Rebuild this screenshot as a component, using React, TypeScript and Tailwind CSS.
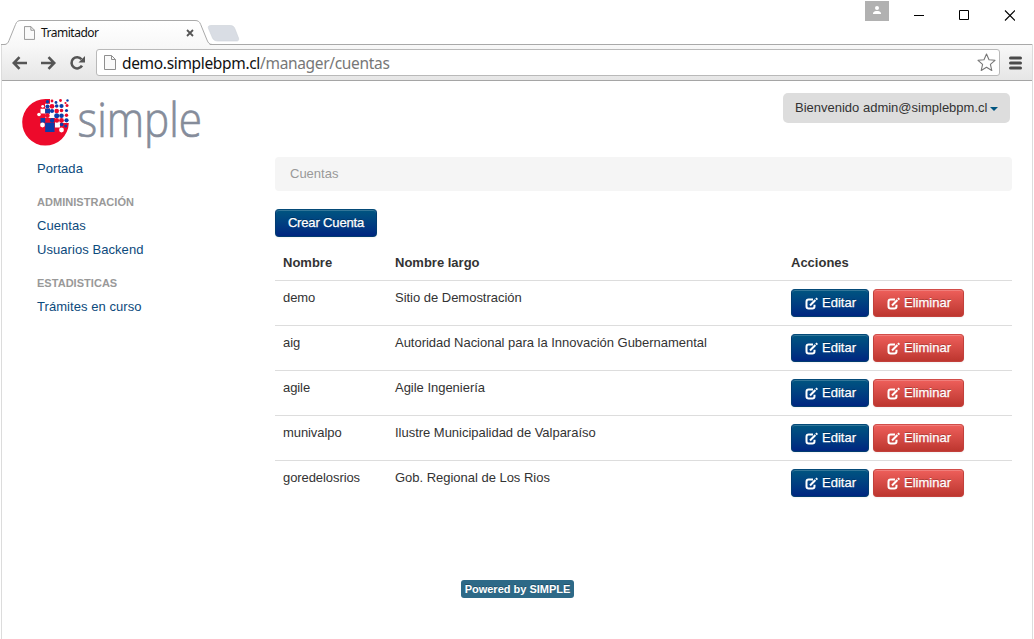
type Account = { name: string; longName: string };

const ACCOUNTS: Account[] = [
  { name: "demo", longName: "Sitio de Demostración" },
  { name: "aig", longName: "Autoridad Nacional para la Innovación Gubernamental" },
  { name: "agile", longName: "Agile Ingeniería" },
  { name: "munivalpo", longName: "Ilustre Municipalidad de Valparaíso" },
  { name: "goredelosrios", longName: "Gob. Regional de Los Rios" },
];

const PageIcon = ({ className }: { className: string }) => (
  <svg className={className} viewBox="0 0 12 15" fill="none" stroke="#8f8f8f">
    <path d="M.5.5H7.5L11.5 4.5V14.5H.5Z" fill="#fafafa" />
    <path d="M7.5.5V4.5H11.5" />
  </svg>
);

const EditIcon = () => (
  <svg className="mt-px h-[13px] w-[13px] shrink-0" viewBox="0 0 13 13" fill="none" stroke="#fff">
    <path d="M8 2.5H3.7Q1.5 2.5 1.5 4.7V9.3Q1.5 11.5 3.7 11.5H7.3Q9.5 11.5 9.5 9.3V7.8" strokeWidth="2" />
    <path d="M5 8.5L10.4 3.1" strokeWidth="2.1" />
    <path d="M11 2.5L12.3 1.2" strokeWidth="2.1" />
  </svg>
);

const TitleBar = () => (
  <div className="relative flex h-[44px] bg-white">
    <svg className="absolute left-0 top-0 h-[45px] w-[244px]" viewBox="0 0 244 45" fill="none">
      <defs>
        <linearGradient id="tab" x1="0" y1="0" x2="0" y2="1">
          <stop offset="0" stopColor="#fff" />
          <stop offset="1" stopColor="#f8f8f8" />
        </linearGradient>
      </defs>
      <path
        d="M211 25.5H230C233 25.5 234 26.5 235 29L238.5 38C239 40 238.5 41 236.5 41H218C215 41 213.5 40 212.5 38L208.5 28.5C207.8 26.5 208.5 25.5 211 25.5Z"
        fill="#d9dde4"
        stroke="#cdd2d9"
        strokeWidth=".6"
      />
      <path d="M5 45L9 40.5L15.5 24.5L21 20.5H195L200.7 24.5L207 40L210 45Z" fill="url(#tab)" />
      <path
        d="M1 44.5H4C7 44.5 8 43 9 40.5L15.5 24.5C16.7 21.5 18 20.5 21 20.5H195C198 20.5 199.5 21.5 200.7 24.5L207 40C208.2 43 209.5 44.5 212.5 44.5H244"
        stroke="#a9a9a9"
      />
    </svg>
    <div className="relative mt-[20px] flex h-[25px] w-[207px] items-center pl-[24px] pr-[13px]">
      <PageIcon className="h-[14px] w-[11px]" />
      <span className="ml-[6px] whitespace-nowrap font-['Noto_Sans',sans-serif] text-[12px] tracking-[-0.5px] text-[#111]">
        Tramitador
      </span>
      <svg className="ml-auto h-[8px] w-[8px]" viewBox="0 0 8 8" stroke="#555" strokeWidth="1.8">
        <path d="M1 1L7 7M7 1L1 7" />
      </svg>
    </div>
    <div className="ml-auto flex pr-[19px]">
      <div className="mt-px flex h-[20px] w-[24px] justify-center bg-[#b1b1b1] pt-[5px]">
        <svg className="h-[9px] w-[10px]" viewBox="0 0 10 9" fill="#fff">
          <circle cx="5" cy="2.1" r="2" />
          <path d="M1 8V7.2C1 5.6 3.4 5 5 5S9 5.6 9 7.2V8Z" />
        </svg>
      </div>
      <svg className="ml-[25px] mt-[10px] h-[11px] w-[101px]" viewBox="0 0 101 11" fill="none" stroke="#000">
        <path d="M0 5.5H10" />
        <path d="M45.5.5H54.5V9.5H45.5Z" />
        <path d="M91 .5L101 10.5M101 .5L91 10.5" strokeWidth="1.1" />
      </svg>
    </div>
  </div>
);

const Toolbar = () => (
  <div className="flex h-[37px] items-center border-y border-t-[#a9a9a9] border-b-[#a5a5a5] bg-linear-to-b from-[#f8f8f8] to-[#e6e6e6] pl-[10px] pr-[10px]">
    <svg className="h-[16px] w-[76px]" viewBox="0 0 76 16" fill="none" stroke="#555" strokeWidth="2.6">
      <path d="M15 8H2M7.5 2.2L1.8 8L7.5 13.8" />
      <path d="M29 8H42M36.5 2.2L42.2 8L36.5 13.8" />
      <path d="M69.5 4.3A5.6 5.6 0 1 0 70 10.6" />
      <path d="M73 1V7.5H66.5Z" fill="#555" stroke="none" />
    </svg>
    <div className="ml-[8px] flex h-[27px] w-[904px] items-center rounded-[3px] border border-[#b9b9b9] bg-white pl-[7px] pr-[3px]">
      <PageIcon className="h-[15px] w-[12px]" />
      <span className="ml-[6px] whitespace-nowrap font-['Noto_Sans',sans-serif] text-[15.5px] leading-[24px] tracking-[-0.33px] text-[#777]">
        <span className="text-[#111]">demo.simplebpm.cl</span>/manager/cuentas
      </span>
      <svg className="ml-auto h-[19px] w-[19px]" viewBox="0 0 19 19" fill="none" stroke="#777" strokeWidth="1.1" strokeLinejoin="round">
        <path d="M9.5 1L12 6.8L18 7.3L13.4 11.4L14.8 17.5L9.5 14.3L4.2 17.5L5.6 11.4L1 7.3L7 6.8Z" />
      </svg>
    </div>
    <svg className="ml-auto h-[14px] w-[13px]" viewBox="0 0 13 14" stroke="#4a4a4a" strokeWidth="3" strokeLinecap="round">
      <path d="M1.5 2H11.5M1.5 7H11.5M1.5 12H11.5" />
    </svg>
  </div>
);

const R = "#ed0a2b";
const B = "#0b3ea8";
const W = "#fff";

// [x, y, radius, color] of the loose pixels around the disc
const DOTS: [number, number, number, string][] = [
  [25.5, 2.7, 1.7, B],
  [30, 2, 1.4, R],
  [34, 3.5, 1.4, B],
  [38.5, 1.5, 1.4, R],
  [45.5, 1.5, 1.2, B],
  [43.5, 4, 1.1, R],
  [25.5, 7.5, 2.1, B],
  [30, 7.3, 2.4, R],
  [34.7, 7, 1.8, B],
  [39.5, 7, 2.1, B],
  [45, 6.5, 1.5, R],
  [20.7, 7.3, 1.4, W],
  [30, 12, 2.1, B],
  [34.7, 12, 2.3, R],
  [39.5, 11.5, 1.8, R],
  [44.5, 11.5, 1.6, B],
  [17, 15.5, 1.8, W],
  [25.3, 16.7, 2.4, R],
  [30, 16.7, 1.8, W],
  [34.7, 16.7, 2.5, B],
  [39.5, 16.7, 2.3, B],
  [44.5, 16.2, 1.7, R],
  [30.2, 21.4, 2.3, B],
  [34.8, 21.4, 2.3, R],
  [39.5, 21.5, 2.4, R],
  [44.5, 21.3, 2.1, B],
  [20.5, 26, 2.4, W],
  [39.7, 25.5, 1.8, B],
  [43.7, 27, 1.5, B],
  [39.5, 31, 2.4, W],
];

const Logo = () => (
  <svg className="h-[56px] w-[184px] overflow-visible" viewBox="0 0 184 56">
    <path d="M23.5 0A23.3 23.3 0 1 0 46.8 24V20L28 2V0Z" fill={R} />
    <path d="M28 0H47V24H33V28.4H38V24H33V19H28ZM23 4.8H28V9.5H23Z" fill={W} />
    <path d="M18.5 9.7H23.2V14.4H18.5ZM23.2 14.4H28V19H23.2Z" fill={W} />
    <path d="M18.5 19H23.2V23.7H18.5ZM23.2 23.7H32.5V33H23.2ZM23.2 9.7H28V14.4H23.2Z" fill={B} />
    {DOTS.map(([x, y, r, fill]) => (
      <circle key={`${x}-${y}`} cx={x} cy={y} r={r} fill={fill} />
    ))}
    <text
      transform="translate(55.5 38) scale(.88 1)"
      fontFamily="Open Sans, sans-serif"
      fontWeight="300"
      fontSize="48"
      fill="#858c9a"
      stroke="#858c9a"
      strokeWidth=".7"
    >
      simple
    </text>
  </svg>
);

const NavLink = ({ children }: { children: string }) => (
  <a className="block h-[24px] leading-[24px] tracking-[0.06px] text-[#0c4a7c]">{children}</a>
);

const NavHeader = ({ children }: { children: string }) => (
  <h3 className="mt-[9px] h-[24px] text-[11px] font-bold leading-[25px] tracking-[0.03px] text-[#999]">{children}</h3>
);

const Sidebar = () => (
  <nav className="w-[238px]">
    <NavLink>Portada</NavLink>
    <NavHeader>ADMINISTRACIÓN</NavHeader>
    <NavLink>Cuentas</NavLink>
    <NavLink>Usuarios Backend</NavLink>
    <NavHeader>ESTADISTICAS</NavHeader>
    <NavLink>Trámites en curso</NavLink>
  </nav>
);

const BLUE =
  "border-[#013b70] border-t-[#044a78] bg-linear-to-b from-[#005580] to-[#002580]";
const RED =
  "border-[#c2403b] border-t-[#d24d49] bg-linear-to-b from-[#ee5f5b] to-[#bd362f]";
const BUTTON =
  "flex h-[28px] items-center justify-center whitespace-nowrap rounded-[4px] border text-[13px] text-white [-webkit-text-stroke:0.25px_white] [text-shadow:0_-1px_0_rgba(0,0,0,0.25)] shadow-[inset_0_1px_0_rgba(255,255,255,0.2),0_1px_2px_rgba(0,0,0,0.05)]";

const AccountsTable = () => (
  <table className="mt-[7px] w-full table-fixed text-left text-[#333]">
    <thead>
      <tr className="h-[36px]">
        <th className="w-[112px] px-2 pt-[2px]">Nombre</th>
        <th className="w-[396px] px-2 pt-[2px]">Nombre largo</th>
        <th className="px-2 pt-[2px]">Acciones</th>
      </tr>
    </thead>
    <tbody>
      {ACCOUNTS.map((a) => (
        <tr key={a.name} className="h-[45px] border-t border-[#ddd] align-top">
          <td className="px-2 pt-[7px] leading-[20px] tracking-[-0.08px]">{a.name}</td>
          <td className="whitespace-nowrap px-2 pt-[7px] leading-[20px] tracking-[-0.02px]">{a.longName}</td>
          <td className="px-2 pt-[8px]">
            <div className="flex gap-[4px]">
              <button className={`${BUTTON} ${BLUE} w-[78px] gap-[4px] pl-px`}>
                <EditIcon />
                Editar
              </button>
              <button className={`${BUTTON} ${RED} w-[91px] gap-[4px] pl-px`}>
                <EditIcon />
                Eliminar
              </button>
            </div>
          </td>
        </tr>
      ))}
    </tbody>
  </table>
);

export default function App() {
  return (
    <div className="h-[639px] w-[1034px] overflow-hidden bg-white font-['Liberation_Sans',Arial,sans-serif] text-[13px]">
      <TitleBar />
      <div className="mx-px h-[595px] border-x border-[#dcdcdc]">
        <Toolbar />
        <header className="flex h-[76px] items-start justify-between pl-[20px] pr-[22px]">
          <div className="pt-[18px]">
            <Logo />
          </div>
          <button className="mt-[12px] flex h-[30px] w-[227px] items-center whitespace-nowrap rounded-[5px] bg-[#ddd] pl-[12px] text-[#333]">
            Bienvenido admin@simplebpm.cl
            <span className="ml-[3px] mt-[2px] border-x-4 border-t-4 border-x-transparent border-t-[#005580]" />
          </button>
        </header>
        <div className="flex pl-[35px] pr-[20px]">
          <Sidebar />
          <main className="flex-1">
            <div className="flex h-[34px] items-center rounded-[4px] bg-[#f5f5f5] px-[15px] text-[#999]">Cuentas</div>
            <button className={`${BUTTON} ${BLUE} mt-[18px] w-[102px] tracking-[-0.15px]`}>Crear Cuenta</button>
            <AccountsTable />
          </main>
        </div>
        <footer className="mt-[75px] flex justify-center pl-px">
          <span className="flex h-[18px] w-[113px] items-center justify-center whitespace-nowrap rounded-[3px] bg-[#2d6987] text-[11px] font-bold text-white [text-shadow:0_-1px_0_rgba(0,0,0,0.25)]">
            Powered by SIMPLE
          </span>
        </footer>
      </div>
    </div>
  );
}
